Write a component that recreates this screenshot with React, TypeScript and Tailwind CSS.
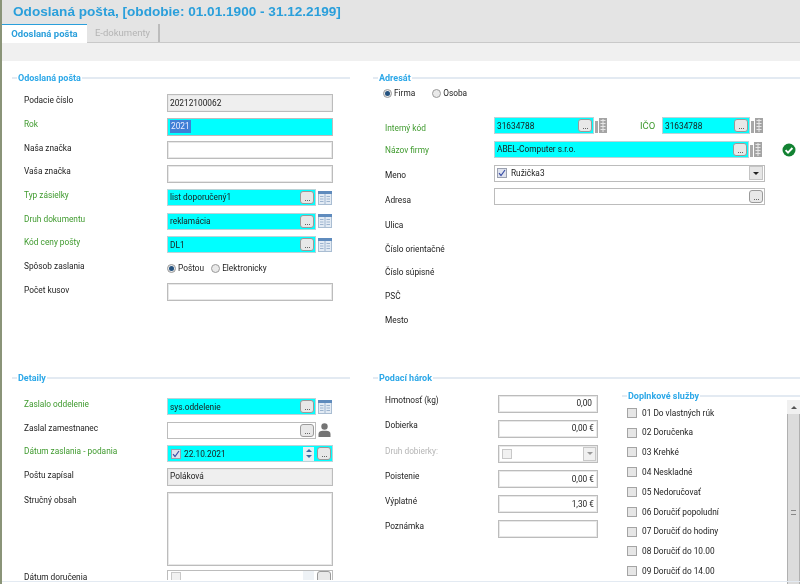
const green = "text-[#3f9a2e]";

function DotsButton() {
  return (
    <span className="shrink-0 w-[14px] h-[13px] rounded-[3px] border border-[#9a9a9a] bg-[#e8e8e8] flex items-end justify-center pb-[2px] gap-[1px]">
      <i className="w-[1px] h-[1px] bg-[#666]" />
      <i className="w-[1px] h-[1px] bg-[#666]" />
      <i className="w-[1px] h-[1px] bg-[#666]" />
    </span>
  );
}

function TableIcon() {
  return (
    <svg width="14" height="14" viewBox="0 0 14 14" className="shrink-0">
      <rect x="0.5" y="0.5" width="13" height="13" fill="#e3ebf4" stroke="#a9bdd2" />
      <rect x="0" y="0" width="14" height="3" fill="#5f8bbd" />
      <path d="M7 3v10M2 5.5h3.5M2 8h3.5M2 10.5h3.5M8.5 5.5H12M8.5 8H12M8.5 10.5H12" stroke="#9db4cf" fill="none" />
    </svg>
  );
}

function BuildingIcon() {
  return (
    <svg width="12" height="15" viewBox="0 0 12 15" className="shrink-0">
      <rect x="0" y="3" width="3" height="12" fill="#a8a8a8" />
      <rect x="4" y="0" width="8" height="15" fill="#a4a4a4" />
      <path d="M5.5 2.5h5M5.5 5.5h5M5.5 8.5h5M5.5 11.5h5" stroke="#e6e6e6" fill="none" />
      <path d="M8 1v13" stroke="#e6e6e6" fill="none" />
    </svg>
  );
}

function PersonIcon() {
  return (
    <svg width="13" height="14" viewBox="0 0 13 14" className="shrink-0">
      <circle cx="6.5" cy="3.5" r="3.2" fill="#747474" />
      <path d="M0.5 14v-3c0-2 2-3.2 4-3.2h4c2 0 4 1.2 4 3.2v3z" fill="#747474" />
    </svg>
  );
}

function CheckBadge() {
  return (
    <svg width="14" height="14" viewBox="0 0 14 14" className="shrink-0">
      <circle cx="7" cy="7" r="6.5" fill="#128232" />
      <path d="M3.6 7.2l2.4 2.4 4.4-4.6" stroke="#fff" strokeWidth="1.9" fill="none" />
    </svg>
  );
}

function Radio({ on }: { on?: boolean }) {
  return (
    <span className="shrink-0 w-[9px] h-[9px] rounded-full border border-[#9a9a9a] bg-[#e9e9e9] flex items-center justify-center">
      {on && <span className="w-[5px] h-[5px] rounded-full bg-[#24527f]" />}
    </span>
  );
}

function Check({ on, faint }: { on?: boolean; faint?: boolean }) {
  return (
    <span className={`shrink-0 w-[10px] h-[10px] border flex items-center justify-center ${faint ? "border-[#c8c8c8] bg-[#f1f1f1]" : on ? "border-[#9aa0b0] bg-[#dfe3ee]" : "border-[#a4a4a4] bg-[#e6e6e6]"}`}>
      {on && (
        <svg width="8" height="8" viewBox="0 0 8 8">
          <path d="M1 4.2l2 2.3L7 1" stroke="#3a4fa8" strokeWidth="1.2" fill="none" />
        </svg>
      )}
    </span>
  );
}

function Legend({ title }: { title: string }) {
  return (
    <div className="flex items-center h-[10px]">
      <span className="w-[5px] h-[2px] bg-[#e3eaf2]" />
      <span className="px-[1px] font-bold text-[#2da8e8] text-[9px] leading-none whitespace-nowrap">{title}</span>
      <span className="flex-1 h-[2px] bg-[#e3eaf2]" />
    </div>
  );
}

function Label({ children, color = "text-[#222]", className = "-mt-[5px]" }: { children: string; color?: string; className?: string }) {
  return <span className={`${color} ${className} whitespace-nowrap`}>{children}</span>;
}

function Box({ className = "", children }: { className?: string; children?: React.ReactNode }) {
  return (
    <div className={`h-[18px] border border-[#bcbcbc] shadow-[inset_0_0_0_1px_#e8e8e8] flex items-center px-[2px] text-[#1b1b1b] ${className}`}>
      {children}
    </div>
  );
}

function LookupBox({ text, className = "w-[142px]", cyan = true }: { text?: string; className?: string; cyan?: boolean }) {
  return (
    <div className={`h-[17px] flex items-center justify-between pl-[2px] pr-[1px] text-[#1b1b1b] border ${cyan ? "bg-[#00ffff] border-[#b9d4d8]" : "bg-white border-[#bcbcbc]"} ${className}`}>
      <span className="whitespace-nowrap">{text}</span>
      <DotsButton />
    </div>
  );
}

function LeftRow({ label, color, h = "h-[23.7px]", children }: { label: string; color?: string; h?: string; children?: React.ReactNode }) {
  return (
    <div className={`flex items-center ${h}`}>
      <div className="w-[155px] pl-[12px] flex items-center">
        <Label color={color}>{label}</Label>
      </div>
      <div className="flex items-center gap-[2px]">{children}</div>
    </div>
  );
}

function RightRow({ label, color, labelClass = "pt-[4px]", children }: { label: string; color?: string; labelClass?: string; children?: React.ReactNode }) {
  return (
    <div className="flex items-center h-[23.7px]">
      <div className={`w-[121px] pl-[12px] flex items-center ${labelClass}`}>
        <Label color={color}>{label}</Label>
      </div>
      {children}
    </div>
  );
}

function SheetRow({ label, color, children }: { label: string; color?: string; children: React.ReactNode }) {
  return (
    <div className="flex items-center h-[25.1px]">
      <div className="w-[125px] pl-[12px] flex items-center">
        <Label color={color} className="-mt-[6px]">{label}</Label>
      </div>
      {children}
    </div>
  );
}

const services = [
  "01 Do vlastných rúk",
  "02 Doručenka",
  "03 Krehké",
  "04 Neskladné",
  "05 Nedoručovať",
  "06 Doručiť popoludní",
  "07 Doručiť do hodiny",
  "08 Doručiť do 10.00",
  "09 Doručiť do 14.00",
];

export default function App() {
  return (
    <div className="w-[800px] h-[584px] overflow-hidden flex bg-white text-[8.3px] font-['Roboto',sans-serif] blur-[0.3px]">
      <div className="w-[2px] shrink-0 bg-[#8a9478]" />
      <div className="flex-1 flex flex-col min-w-0">
        {/* Header */}
        <div className="h-[24px] bg-[#e4e4e4] flex items-center pl-[11px] shrink-0">
          <h1 className="text-[13.6px] font-bold text-[#2a9fdb] whitespace-nowrap font-['Liberation_Sans',sans-serif]">
            Odoslaná pošta, [obdobie: 01.01.1900 - 31.12.2199]
          </h1>
        </div>

        {/* Tabs */}
        <div className="h-[19px] bg-[#e4e4e4] flex shrink-0 border-b border-[#c9c9c9]">
          <div className="w-[85px] h-[19px] bg-white border-t border-[#2a9fdb] flex items-center justify-center font-bold text-[#2a9fdb] text-[9.5px]">
            Odoslaná pošta
          </div>
          <div className="w-[73px] border-r-2 border-[#bcbcbc] flex items-center justify-center text-[#b4b4b4] text-[9.5px]">
            E-dokumenty
          </div>
        </div>
        <div className="h-[18px] bg-[#f0f0f0] shrink-0" />

        {/* Content */}
        <div className="flex-1 min-h-0 overflow-hidden grid grid-cols-[371px_427px] relative">
          {/* Left column */}
          <div className="pl-[10px] pt-[12px] pr-[23px] flex flex-col">
            <Legend title="Odoslaná pošta" />
            <div className="flex flex-col pt-[8px] h-[290px]">
              <LeftRow label="Podacie číslo">
                <Box className="w-[166px] bg-[#efefef]">20212100062</Box>
              </LeftRow>
              <LeftRow label="Rok" color={green}>
                <Box className="w-[166px] bg-[#00ffff] border-[#b9d4d8] shadow-none">
                  <span className="bg-[#3f7fd6] text-[#eef] px-[1px]">2021</span>
                </Box>
              </LeftRow>
              <LeftRow label="Naša značka">
                <Box className="w-[166px]" />
              </LeftRow>
              <LeftRow label="Vaša značka">
                <Box className="w-[166px]" />
              </LeftRow>
              <LeftRow label="Typ zásielky" color={green}>
                <LookupBox text="list doporučený1" className="w-[149px]" />
                <TableIcon />
              </LeftRow>
              <LeftRow label="Druh dokumentu" color={green}>
                <LookupBox text="reklamácia" className="w-[149px]" />
                <TableIcon />
              </LeftRow>
              <LeftRow label="Kód ceny pošty" color={green}>
                <LookupBox text="DL1" className="w-[149px]" />
                <TableIcon />
              </LeftRow>
              <LeftRow label="Spôsob zaslania">
                <Radio on />
                <span className="text-[#222] mr-[5px]">Poštou</span>
                <Radio />
                <span className="text-[#222]">Elektronicky</span>
              </LeftRow>
              <LeftRow label="Počet kusov">
                <Box className="w-[166px]" />
              </LeftRow>
            </div>

            <Legend title="Detaily" />
            <div className="flex flex-col pt-[12px]">
              <LeftRow label="Zaslalo oddelenie" color={green} h="h-[23.5px]">
                <LookupBox text="sys.oddelenie" className="w-[149px]" />
                <TableIcon />
              </LeftRow>
              <LeftRow label="Zaslal zamestnanec" h="h-[23.5px]">
                <LookupBox className="w-[149px]" cyan={false} />
                <PersonIcon />
              </LeftRow>
              <LeftRow label="Dátum zaslania - podania" color={green} h="h-[23.5px]">
                <div className="w-[166px] h-[17px] bg-[#00ffff] border border-[#b9d4d8] flex items-center pl-[3px] pr-[1px] gap-[3px] text-[#1b1b1b]">
                  <Check on />
                  <span className="flex-1">22.10.2021</span>
                  <span className="w-[11px] h-[14px] bg-[#e6f0f4] flex flex-col items-center justify-center gap-[3px]">
                    <i className="border-x-[3px] border-x-transparent border-b-[3px] border-b-[#3b6ea5]" />
                    <i className="border-x-[3px] border-x-transparent border-t-[3px] border-t-[#3b6ea5]" />
                  </span>
                  <DotsButton />
                </div>
              </LeftRow>
              <LeftRow label="Poštu zapísal" h="h-[23.5px]">
                <Box className="w-[166px] bg-[#efefef] items-start pt-[1px]">Poláková</Box>
              </LeftRow>
              <div className="flex h-[81px] items-start pt-[3px]">
                <div className="w-[155px] pl-[12px] pt-[2px] text-[#222]">Stručný obsah</div>
                <div className="w-[166px] h-[74px] border border-[#bcbcbc] shadow-[inset_0_0_0_1px_#e8e8e8]" />
              </div>
              <div className="flex items-start h-[10px] overflow-hidden">
                <div className="w-[155px] pl-[12px] pt-[1px] text-[#222]">Dátum doručenia</div>
                <div className="w-[166px] h-[14px] border border-[#bcbcbc] flex items-center pl-[3px] pr-[1px] gap-[3px]">
                  <Check faint />
                  <span className="flex-1" />
                  <span className="w-[11px] h-[12px] bg-[#eef2f6]" />
                  <DotsButton />
                </div>
              </div>
            </div>
          </div>

          {/* Right column */}
          <div className="pt-[12px] flex flex-col min-w-0">
            <Legend title="Adresát" />
            <div className="flex flex-col h-[290px]">
              <div className="flex items-center h-[18px] pl-[10px] pt-[3px] gap-[2px] text-[#222]">
                <Radio on />
                <span className="mr-[15px]">Firma</span>
                <Radio />
                <span>Osoba</span>
              </div>
              <div className="h-[13px]" />
              <RightRow label="Interný kód" color={green} labelClass="pt-[9px]">
                <div className="flex items-center gap-[1px]">
                  <LookupBox text="31634788" className="w-[100px]" />
                  <BuildingIcon />
                </div>
                <span className={`${green} ml-[33px] mr-[7px] w-[15px] text-[9.5px]`}>IČO</span>
                <div className="flex items-center gap-[1px]">
                  <LookupBox text="31634788" className="w-[88px]" />
                  <BuildingIcon />
                </div>
              </RightRow>
              <RightRow label="Názov firmy" color={green} labelClass="pt-[7px]">
                <div className="flex items-center gap-[1px]">
                  <LookupBox text="ABEL-Computer s.r.o." className="w-[255px]" />
                  <BuildingIcon />
                </div>
                <span className="ml-[20px]">
                  <CheckBadge />
                </span>
              </RightRow>
              <RightRow label="Meno" labelClass="pt-[8px]">
                <div className="w-[271px] h-[17px] border border-[#bcbcbc] flex items-center pl-[2px] pr-[1px] gap-[4px] text-[#1b1b1b]">
                  <Check on />
                  <span className="flex-1">Ružička3</span>
                  <span className="w-[14px] h-[14px] bg-[#e6e6e6] border border-[#c4c4c4] flex items-center justify-center">
                    <i className="border-x-[3px] border-x-transparent border-t-[3px] border-t-[#222]" />
                  </span>
                </div>
              </RightRow>
              <RightRow label="Adresa" labelClass="pt-[12px]">
                <LookupBox className="w-[271px]" cyan={false} />
              </RightRow>
              <div className="h-[5px]" />
              <RightRow label="Ulica" />
              <RightRow label="Číslo orientačné" />
              <RightRow label="Číslo súpisné" />
              <RightRow label="PSČ" />
              <RightRow label="Mesto" />
            </div>

            <Legend title="Podací hárok" />
            <div className="flex flex-1 min-h-0">
              <div className="w-[249px] pt-[8px] shrink-0">
                <SheetRow label="Hmotnosť (kg)">
                  <Box className="w-[100px] justify-end pr-[5px]">0,00</Box>
                </SheetRow>
                <SheetRow label="Dobierka">
                  <Box className="w-[100px] justify-end pr-[3px]">0,00 €</Box>
                </SheetRow>
                <SheetRow label="Druh dobierky:" color="text-[#b5b5b5]">
                  <Box className="w-[100px] justify-between pl-[3px] pr-[1px]">
                    <Check faint />
                    <span className="w-[13px] h-[14px] bg-[#f0f0f0] border border-[#c8c8c8] flex items-center justify-center">
                      <i className="border-x-[3px] border-x-transparent border-t-[3px] border-t-[#999]" />
                    </span>
                  </Box>
                </SheetRow>
                <SheetRow label="Poistenie">
                  <Box className="w-[100px] justify-end pr-[3px]">0,00 €</Box>
                </SheetRow>
                <SheetRow label="Výplatné">
                  <Box className="w-[100px] justify-end pr-[3px]">1,30 €</Box>
                </SheetRow>
                <SheetRow label="Poznámka">
                  <Box className="w-[100px]" />
                </SheetRow>
              </div>
              <div className="flex-1 min-w-0 pt-[8px] flex flex-col">
                <Legend title="Doplnkové služby" />
                <div className="flex flex-1 min-h-0">
                  <div className="flex-1 pl-[5px] pt-[2px] text-[#222]">
                    {services.map((s) => (
                      <div key={s} className="flex items-center gap-[5px] h-[19.8px]">
                        <Check />
                        <span className="whitespace-nowrap">{s}</span>
                      </div>
                    ))}
                  </div>
                  <div className="w-[13px] -mt-[1px] bg-[#f0f0f0] flex flex-col items-center shrink-0">
                    <div className="h-[14px] flex items-center justify-center">
                      <i className="border-x-[3px] border-x-transparent border-b-[3px] border-b-[#555]" />
                    </div>
                    <div className="w-full flex-1 bg-[#dcdcdc] border-x border-[#b0b0b0] flex items-center justify-center pt-[26px]">
                      <span className="w-[5px] h-[5px] border-y border-[#888]" />
                    </div>
                  </div>
                </div>
              </div>
            </div>
          </div>

          {/* Bottom edge of the scrolled form */}
          <div className="absolute left-0 right-0 bottom-[2px] h-[1px] bg-[#e3eaf2]" />
        </div>
      </div>
    </div>
  );
}
